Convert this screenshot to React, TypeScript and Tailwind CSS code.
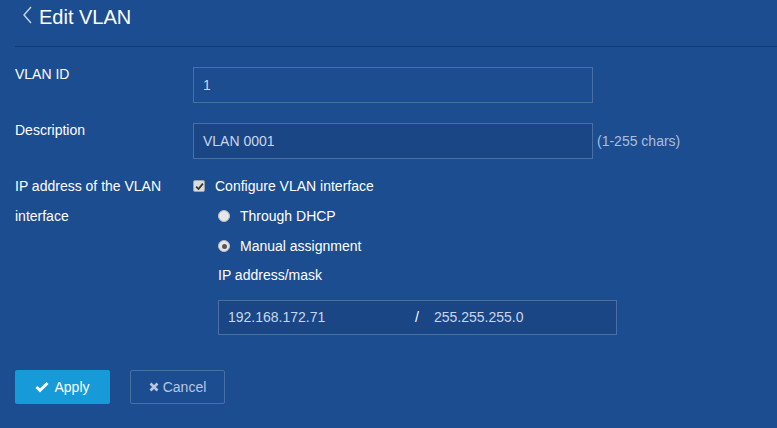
import React from 'react'

const Label = ({ children }: { children: React.ReactNode }) => (
  <div className="w-[178px] shrink-0 text-[14px] leading-[30px] text-white">{children}</div>
)

export default function App() {
  return (
    <div
      className="h-[428px] w-[777px] overflow-hidden bg-[#1c4d91] text-white"
      style={{ fontFamily: '"Liberation Sans", Arial, sans-serif' }}
    >
      <div className="flex h-[29px] items-end pl-[21px]">
        <svg width="14" height="20" viewBox="0 0 14 20" className="mb-[4px] mr-[4px]">
          <path d="M10 2 L3 10 L10 18" fill="none" stroke="#c9d6ea" strokeWidth="1.4" />
        </svg>
        <span className="text-[20px] leading-[24px]">Edit VLAN</span>
      </div>
      <div className="ml-[15px] mt-[17px] h-px bg-[#113a72]" />

      <div className="px-[15px] pt-[20px]">
        <div className="flex">
          <Label>
            <div className="-mt-[8px]">VLAN ID</div>
          </Label>
          <div className="flex h-[36px] w-[400px] items-center border border-[#4a6fa4] bg-[#1c4d91] px-[9px] text-[14px] text-[#c9d6ea]">
            1
          </div>
        </div>

        <div className="mt-[20px] flex">
          <Label>
            <div className="-mt-[8px]">Description</div>
          </Label>
          <div className="flex h-[36px] w-[400px] items-center border border-[#4a6fa4] bg-[#1a4686] px-[9px] text-[14px] text-[#c9d6ea]">
            VLAN 0001
          </div>
          <span className="ml-[4px] self-center text-[14px] text-[#a9bedc]">(1-255 chars)</span>
        </div>

        <div className="mt-[12px] flex">
          <Label>
            IP address of the VLAN
            <br />
            interface
          </Label>
          <div className="flex flex-col text-[14px]">
            <label className="flex h-[30px] items-center">
              <span className="flex h-[12px] w-[12px] items-center justify-center rounded-[2px] border border-[#9aa3ae] bg-[#dcdcdc]">
                <svg width="9" height="9" viewBox="0 0 9 9">
                  <path d="M1.2 4.6 L3.5 7 L7.9 1.6" fill="none" stroke="#333" strokeWidth="1.8" />
                </svg>
              </span>
              <span className="ml-[10px]">Configure VLAN interface</span>
            </label>
            <div className="flex flex-col pl-[25px]">
              <label className="flex h-[30px] items-center">
                <span className="h-[12px] w-[12px] rounded-full border border-[#b9bec5] bg-[#e6e6e6]" />
                <span className="ml-[10px]">Through DHCP</span>
              </label>
              <label className="flex h-[30px] items-center">
                <span className="flex h-[12px] w-[12px] items-center justify-center rounded-full border border-[#b9bec5] bg-[#e6e6e6]">
                  <span className="h-[5px] w-[5px] rounded-full bg-[#555]" />
                </span>
                <span className="ml-[10px]">Manual assignment</span>
              </label>
              <div className="flex h-[29px] items-center">IP address/mask</div>
              <div className="mt-[10px] flex h-[35px] w-[399px] items-center border border-[#4a6fa4] bg-[#1a4686] pl-[9px] text-[#c9d6ea]">
                <span className="w-[187px]">192.168.172.71</span>
                <span className="w-[19px] text-white">/</span>
                <span>255.255.255.0</span>
              </div>
            </div>
          </div>
        </div>

        <div className="mt-[35px] flex gap-[20px]">
          <button className="flex h-[34px] w-[95px] items-center justify-center gap-[5px] rounded-[2px] bg-[#169ad8] text-[14px] text-white">
            <svg width="14" height="12" viewBox="0 0 14 12">
              <path d="M1.5 6 L5 9.5 L12.5 2" fill="none" stroke="#fff" strokeWidth="3" />
            </svg>
            Apply
          </button>
          <button className="flex h-[34px] w-[95px] items-center justify-center gap-[4px] rounded-[2px] border border-[#4a6fa4] text-[14px] text-[#b6c7e0]">
            <svg width="10" height="10" viewBox="0 0 10 10">
              <path d="M1.5 1.5 L8.5 8.5 M8.5 1.5 L1.5 8.5" fill="none" stroke="#b6c7e0" strokeWidth="2.6" />
            </svg>
            Cancel
          </button>
        </div>
      </div>
    </div>
  )
}
